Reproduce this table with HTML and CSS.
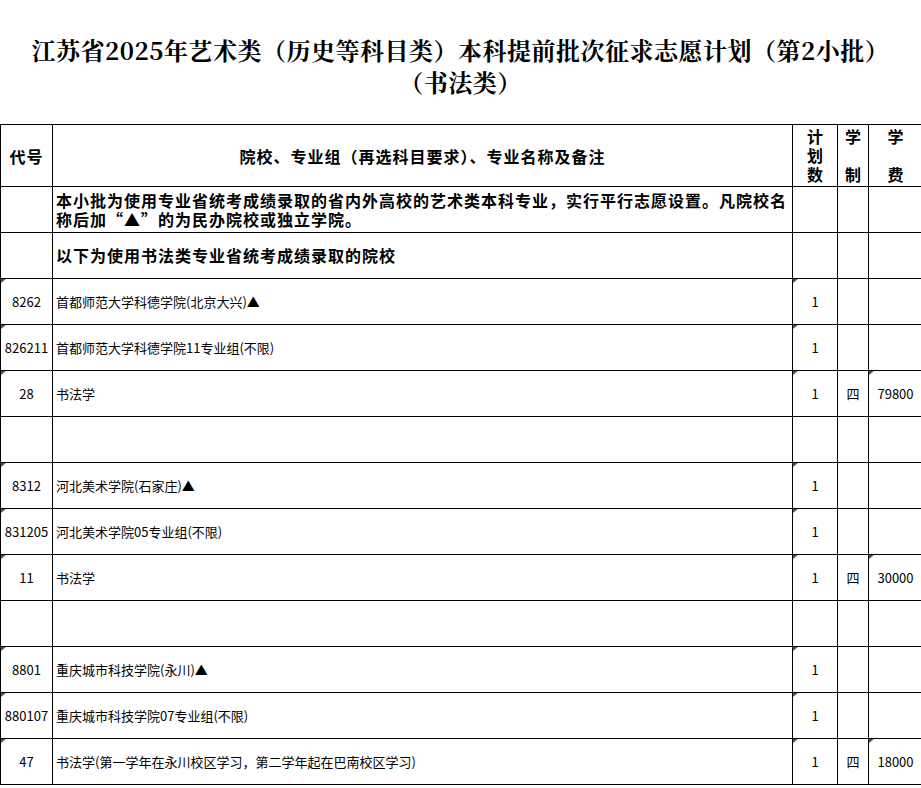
FILE: index.html
```html
<!DOCTYPE html>
<html lang="zh-CN">
<head>
<meta charset="utf-8">
<title>江苏省2025年艺术类（历史等科目类）本科提前批次征求志愿计划（第2小批）</title>
<link rel="stylesheet" href="styles.css">
</head>
<body>
<div class="page">
  <h1 class="title">
    <span class="title-line">江苏省2025年艺术类（历史等科目类）本科提前批次征求志愿计划（第2小批）</span>
    <span class="title-line">（书法类）</span>
  </h1>

  <table class="plan">
    <colgroup>
      <col class="c-code">
      <col class="c-name">
      <col class="c-num">
      <col class="c-len">
      <col class="c-fee">
    </colgroup>
    <thead>
      <tr class="head">
        <th class="h-code">代号</th>
        <th class="h-name">院校、专业组（再选科目要求）、专业名称及备注</th>
        <th class="h-stack"><div class="stack"><span>计</span><span>划</span><span>数</span></div></th>
        <th class="h-stack"><div class="stack"><span>学</span><span>制</span></div></th>
        <th class="h-stack"><div class="stack"><span>学</span><span>费</span></div></th>
      </tr>
    </thead>
    <tbody>
      <tr class="note">
        <td></td>
        <td class="note-text">本小批为使用专业省统考成绩录取的省内外高校的艺术类本科专业，实行平行志愿设置。凡院校名<br>称后加“▲”的为民办院校或独立学院。</td>
        <td></td><td></td><td></td>
      </tr>
      <tr class="note">
        <td></td>
        <td class="note-text">以下为使用书法类专业省统考成绩录取的院校</td>
        <td></td><td></td><td></td>
      </tr>

      <tr class="row">
        <td class="code mark">8262</td>
        <td class="name">首都师范大学科德学院(北京大兴)▲</td>
        <td class="val mark">1</td><td class="val"></td><td class="val"></td>
      </tr>
      <tr class="row">
        <td class="code mark">826211</td>
        <td class="name">首都师范大学科德学院11专业组(不限)</td>
        <td class="val mark">1</td><td class="val"></td><td class="val"></td>
      </tr>
      <tr class="row">
        <td class="code mark">28</td>
        <td class="name">书法学</td>
        <td class="val mark">1</td><td class="val">四</td><td class="val mark">79800</td>
      </tr>
      <tr class="row">
        <td class="code"></td><td class="name"></td><td class="val"></td><td class="val"></td><td class="val"></td>
      </tr>

      <tr class="row">
        <td class="code mark">8312</td>
        <td class="name">河北美术学院(石家庄)▲</td>
        <td class="val mark">1</td><td class="val"></td><td class="val"></td>
      </tr>
      <tr class="row">
        <td class="code mark">831205</td>
        <td class="name">河北美术学院05专业组(不限)</td>
        <td class="val mark">1</td><td class="val"></td><td class="val"></td>
      </tr>
      <tr class="row">
        <td class="code mark">11</td>
        <td class="name">书法学</td>
        <td class="val mark">1</td><td class="val">四</td><td class="val mark">30000</td>
      </tr>
      <tr class="row">
        <td class="code"></td><td class="name"></td><td class="val"></td><td class="val"></td><td class="val"></td>
      </tr>

      <tr class="row">
        <td class="code mark">8801</td>
        <td class="name">重庆城市科技学院(永川)▲</td>
        <td class="val mark">1</td><td class="val"></td><td class="val"></td>
      </tr>
      <tr class="row">
        <td class="code mark">880107</td>
        <td class="name">重庆城市科技学院07专业组(不限)</td>
        <td class="val mark">1</td><td class="val"></td><td class="val"></td>
      </tr>
      <tr class="row">
        <td class="code mark">47</td>
        <td class="name">书法学(第一学年在永川校区学习，第二学年起在巴南校区学习)</td>
        <td class="val mark">1</td><td class="val">四</td><td class="val mark">18000</td>
      </tr>
    </tbody>
  </table>
</div>
</body>
</html>
```

FILE: styles.css
```css
html, body {
  margin: 0;
  padding: 0;
  background: #ffffff;
  overflow: hidden;
}

body {
  font-family: "Noto Sans CJK SC", "Noto Sans", sans-serif;
  color: #000000;
}

.page {
  width: 921px;
}

.title {
  margin: 0;
  padding-top: 34px;
  padding-bottom: 26px;
  font-family: "Noto Serif CJK SC", "Source Han Serif SC", "Noto Sans CJK SC", serif;
  font-weight: 700;
  font-size: 24px;
  line-height: 32px;
  letter-spacing: 0.5px;
  text-align: center;
  display: flex;
  flex-direction: column;
  align-items: center;
}

.title-line {
  display: block;
  white-space: nowrap;
}

.plan {
  border-collapse: collapse;
  table-layout: fixed;
  width: 922px;
}

.c-code { width: 52px; }
.c-name { width: 740px; }
.c-num  { width: 45px; }
.c-len  { width: 31px; }
.c-fee  { width: 54px; }

.plan th,
.plan td {
  border: 1px solid #000000;
  padding: 0;
  position: relative;
}

.head {
  height: 62px;
}

.head th {
  font-size: 16px;
  font-weight: 700;
  letter-spacing: 1px;
  text-align: center;
  vertical-align: middle;
}

.h-code {
  letter-spacing: 1px;
}

.h-stack {
  vertical-align: top !important;
  letter-spacing: 0 !important;
}

.stack {
  height: 56px;
  padding-top: 2px;
  display: flex;
  flex-direction: column;
  justify-content: space-between;
  align-items: center;
  line-height: 18px;
}

.note {
  height: 46px;
}

.note-text {
  font-size: 16px;
  font-weight: 700;
  letter-spacing: 1px;
  line-height: 19px;
  padding: 0 2px 0 3px !important;
  white-space: nowrap;
}

.row {
  height: 46px;
}

.row td {
  font-size: 13px;
  line-height: 16px;
  vertical-align: middle;
}

.code {
  text-align: center;
}

.name {
  padding-left: 3px !important;
  white-space: nowrap;
}

.val {
  text-align: center;
}

.mark::before {
  content: "";
  position: absolute;
  top: 0;
  left: 0;
  width: 0;
  height: 0;
  border-top: 4px solid #1b7f1b;
  border-right: 5px solid transparent;
}
```
